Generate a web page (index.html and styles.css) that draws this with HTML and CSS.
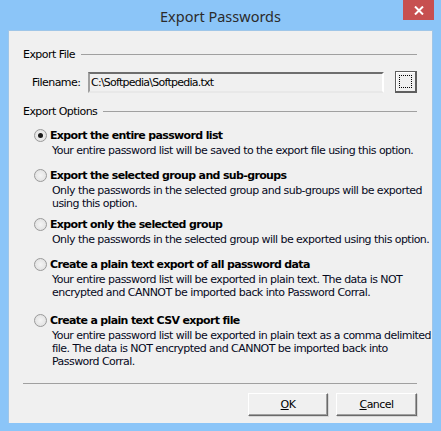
FILE: index.html
```html
<!DOCTYPE html>
<html>
<head>
<meta charset="utf-8">
<link rel="stylesheet" href="styles.css">
</head>
<body>
<div class="window">
  <div class="titlebar">
    <div class="title">Export Passwords</div>
    <div class="close">
      <svg width="10" height="9" viewBox="0 0 10 9"><path d="M1 0.5 L9 8.5 M9 0.5 L1 8.5" stroke="#fff" stroke-width="2"/></svg>
    </div>
  </div>
  <div class="client">
    <div class="group-head"><span>Export File</span><div class="rule"></div></div>
    <div class="file-row">
      <label class="file-label">Filename:</label>
      <div class="field">C:\Softpedia\Softpedia.txt</div>
      <div class="browse"><div class="focus"></div></div>
    </div>
    <div class="group-head options-head"><span>Export Options</span><div class="rule"></div></div>
    <div class="options">
      <div class="opt opt1">
        <div class="opt-title"><span class="radio checked"></span><b>Export the entire password list</b></div>
        <div class="desc">Your entire password list will be saved to the export file using this option.</div>
      </div>
      <div class="opt opt2">
        <div class="opt-title"><span class="radio"></span><b>Export the selected group and sub-groups</b></div>
        <div class="desc">Only the passwords in the selected group and sub-groups will be exported<br>using this option.</div>
      </div>
      <div class="opt opt3">
        <div class="opt-title"><span class="radio"></span><b>Export only the selected group</b></div>
        <div class="desc">Only the passwords in the selected group will be exported using this option.</div>
      </div>
      <div class="opt opt4">
        <div class="opt-title"><span class="radio"></span><b>Create a plain text export of all password data</b></div>
        <div class="desc">Your entire password list will be exported in plain text. The data is NOT<br>encrypted and CANNOT be imported back into Password Corral.</div>
      </div>
      <div class="opt opt5">
        <div class="opt-title"><span class="radio"></span><b>Create a plain text CSV export file</b></div>
        <div class="desc">Your entire password list will be exported in plain text as a comma delimited<br>file. The data is NOT encrypted and CANNOT be imported back into<br>Password Corral.</div>
      </div>
    </div>
    <div class="sep"></div>
    <div class="buttons">
      <div class="btn"><u>O</u>K</div>
      <div class="btn btn-cancel"><u>C</u>ancel</div>
    </div>
  </div>
</div>
</body>
</html>
```
FILE: styles.css
```css
* { box-sizing: border-box; }
html, body { margin: 0; padding: 0; }
body {
  width: 441px;
  height: 431px;
  overflow: hidden;
  background: #8bc5f8;
  font-family: "DejaVu Sans", Tahoma, sans-serif;
  font-size: 11px;
  letter-spacing: -0.55px;
  color: #000;
}
.window {
  width: 441px;
  height: 431px;
  display: flex;
  flex-direction: column;
}
.titlebar {
  height: 30px;
  position: relative;
  display: flex;
  justify-content: center;
  align-items: center;
}
.title {
  font-family: "Noto Sans", "Open Sans", sans-serif;
  font-size: 14.5px;
  letter-spacing: 0;
  color: #2b2b2b;
  padding-top: 1px;
}
.close {
  position: absolute;
  top: 0;
  left: 403px;
  width: 31px;
  height: 20px;
  background: #c75050;
  display: flex;
  align-items: center;
  justify-content: center;
}
.client {
  margin: 0 8px;
  height: 393px;
  background: #f0f0f0;
  border: 1px solid #9fc6e8;
  border-bottom: none;
  padding: 16px 15px 0 14px;
  display: flex;
  flex-direction: column;
}
.group-head {
  display: flex;
  align-items: center;
  height: 14px;
}
.group-head span { white-space: nowrap; }
.rule {
  flex: 1;
  height: 1px;
  background: #a0a0a0;
  margin-left: 6px;
  margin-top: 1px;
}
.file-row {
  display: flex;
  align-items: center;
  margin-top: 10px;
  height: 22px;
  padding-left: 9px;
}
.file-label { width: 56px; }
.field {
  width: 296px;
  height: 21px;
  border-top: 2px solid #6e6e6e;
  border-left: 2px solid #a0a0a0;
  border-right: 2px solid #ffffff;
  border-bottom: 2px solid #e8e8e8;
  padding: 2px 0 0 1px;
  white-space: nowrap;
  overflow: hidden;
  letter-spacing: -0.75px;
}
.browse {
  width: 22px;
  height: 22px;
  margin-left: 11px;
  border: 1px solid #5f5f5f;
  border-right-width: 2px;
  border-bottom-width: 2px;
  box-shadow: inset 1px 1px 0 #fff;
  background: #f0f0f0;
  padding: 3px;
}
.focus {
  width: 100%;
  height: 100%;
  border: 1px dotted #000;
}
.options-head { margin-top: 11px; }
.options {
  display: flex;
  flex-direction: column;
  padding-left: 12px;
  margin-top: 9px;
}
.opt-title {
  display: flex;
  align-items: center;
  height: 16px;
}
.opt-title b {
  font-weight: bold;
  white-space: nowrap;
  letter-spacing: -0.65px;
}
.radio {
  width: 13px;
  height: 13px;
  border-radius: 50%;
  border: 1px solid #9a9a9a;
  background: radial-gradient(circle at 50% 50%, #f4f4f4 0, #e6e6e6 60%, #dcdcdc 100%);
  margin-right: 3px;
  margin-left: -1px;
  display: flex;
  align-items: center;
  justify-content: center;
}
.radio.checked::after {
  content: "";
  width: 5px;
  height: 5px;
  border-radius: 50%;
  background: #1a1a1a;
}
.desc {
  padding-left: 17px;
  line-height: 13px;
  margin-top: 1px;
  color: #06091c;
  white-space: nowrap;
}
.opt2 { margin-top: 10px; }
.opt3 { margin-top: 6px; }
.opt4 { margin-top: 10px; }
.opt5 { margin-top: 13px; }
.sep {
  height: 1px;
  background: #a0a0a0;
  margin-top: 15px;
}
.buttons {
  display: flex;
  justify-content: flex-end;
  gap: 8px;
  margin-top: 9px;
}
.btn {
  width: 80px;
  height: 23px;
  border-top: 1px solid #ffffff;
  border-left: 1px solid #ffffff;
  border-right: 1px solid #6a6a6a;
  border-bottom: 1px solid #6a6a6a;
  box-shadow: inset -1px -1px 0 #a0a0a0, 1px 1px 0 #d8d8d8;
  display: flex;
  align-items: center;
  justify-content: center;
  background: #f0f0f0;
}
.btn-cancel { width: 81px; }
```
